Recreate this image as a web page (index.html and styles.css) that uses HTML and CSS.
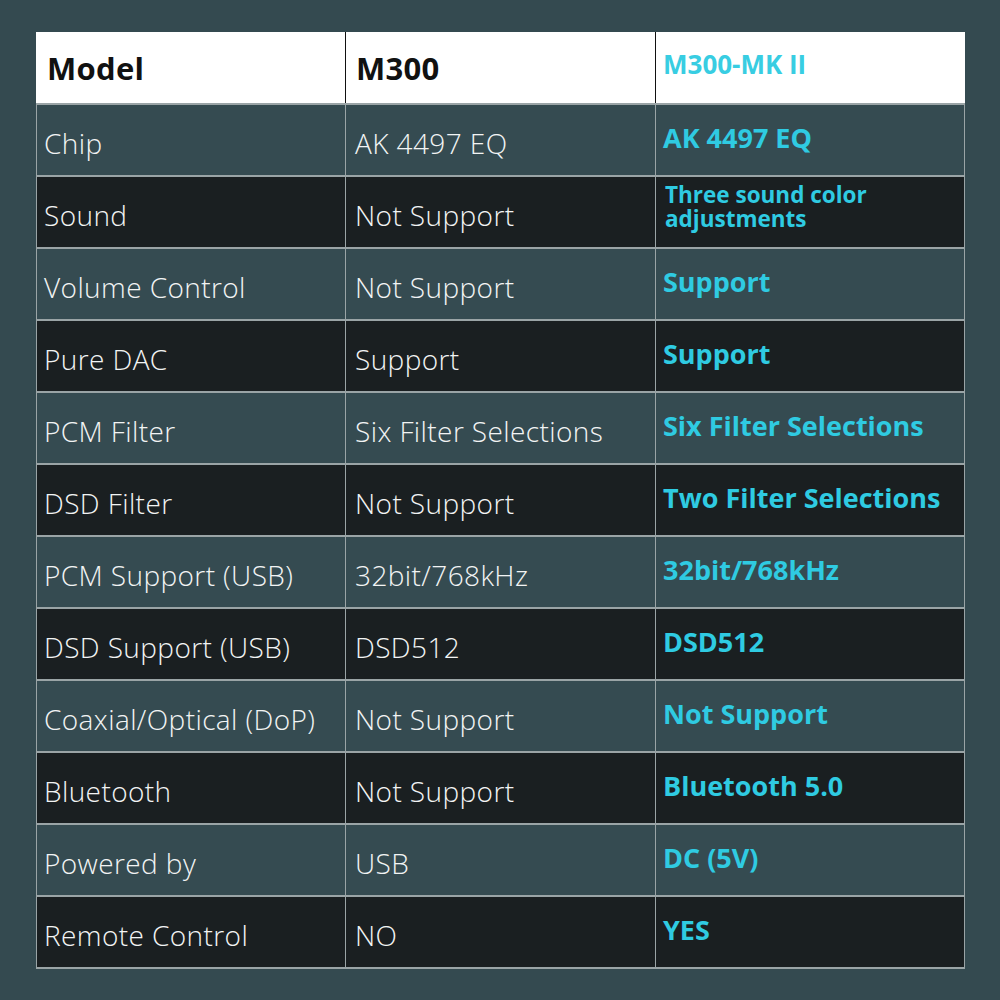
FILE: index.html
```html
<!DOCTYPE html>
<html>
<head>
<meta charset="utf-8">
<link rel="stylesheet" href="styles.css">
</head>
<body>
<div class="page">
  <div class="table">
    <div class="row head">
      <div class="cell c1">Model</div>
      <div class="cell c2">M300</div>
      <div class="cell c3">M300-MK II</div>
    </div>
    <div class="row light"><div class="cell c1">Chip</div><div class="cell c2">AK 4497 EQ</div><div class="cell c3">AK 4497 EQ</div></div>
    <div class="row dark"><div class="cell c1">Sound</div><div class="cell c2">Not Support</div><div class="cell c3 small"><span class="ln">Three sound color</span><span class="ln">adjustments</span></div></div>
    <div class="row light"><div class="cell c1">Volume Control</div><div class="cell c2">Not Support</div><div class="cell c3">Support</div></div>
    <div class="row dark"><div class="cell c1">Pure DAC</div><div class="cell c2">Support</div><div class="cell c3">Support</div></div>
    <div class="row light"><div class="cell c1">PCM Filter</div><div class="cell c2">Six Filter Selections</div><div class="cell c3">Six Filter Selections</div></div>
    <div class="row dark"><div class="cell c1">DSD Filter</div><div class="cell c2">Not Support</div><div class="cell c3">Two Filter Selections</div></div>
    <div class="row light"><div class="cell c1">PCM Support (USB)</div><div class="cell c2">32bit/768kHz</div><div class="cell c3">32bit/768kHz</div></div>
    <div class="row dark"><div class="cell c1">DSD Support (USB)</div><div class="cell c2">DSD512</div><div class="cell c3">DSD512</div></div>
    <div class="row light"><div class="cell c1">Coaxial/Optical (DoP)</div><div class="cell c2">Not Support</div><div class="cell c3">Not Support</div></div>
    <div class="row dark"><div class="cell c1">Bluetooth</div><div class="cell c2">Not Support</div><div class="cell c3">Bluetooth 5.0</div></div>
    <div class="row light"><div class="cell c1">Powered by</div><div class="cell c2">USB</div><div class="cell c3">DC (5V)</div></div>
    <div class="row dark"><div class="cell c1">Remote Control</div><div class="cell c2">NO</div><div class="cell c3">YES</div></div>
  </div>
</div>
</body>
</html>
```
FILE: styles.css
```css
html, body {
  margin: 0;
  padding: 0;
}
body {
  background: #344a50;
  width: 1000px;
  height: 1000px;
  overflow: hidden;
}
.page {
  padding: 32px 35px 0 36px;
}
.table {
  width: 929px;
  border-bottom: 2px solid #9aa4a6;
}
.row {
  display: grid;
  grid-template-columns: 309px 310px 310px;
  height: 70px;
  border-top: 2px solid #9aa4a6;
}
.row.head {
  height: 71px;
  border-top: none;
  background: #ffffff;
}
.row.light { background: #354b51; }
.row.dark { background: #1a1f21; }
.cell {
  display: flex;
  align-items: center;
  padding: 6px 0 0 9px;
  font-family: "Open Sans", "Noto Sans", sans-serif;
  font-weight: 300;
  font-size: 28px;
  color: #f2f4f4;
  letter-spacing: 0.4px;
  white-space: nowrap;
  border-left: 1px solid #9aa4a6;
}
.cell.c1 { padding-left: 7px; }
.row.head .cell {
  border-left: 1px solid #111;
  color: #111;
  font-weight: 700;
  font-size: 31px;
  letter-spacing: 0.3px;
  padding: 0 0 0 10px;
}
.row.head .cell.c1 { border-left: none; padding-left: 11px; }
.cell.c3 {
  font-weight: 700;
  color: #2fcbe2;
  font-size: 27px;
  letter-spacing: 0;
  padding: 0 0 6px 7px;
  border-right: 1px solid #9aa4a6;
}
.row.head .cell.c3 {
  color: #38cde2;
  font-weight: 700;
  font-size: 26px;
  letter-spacing: 0;
  padding: 0 0 8px 7px;
  border-right: none;
}
.cell.c3.small {
  flex-direction: column;
  align-items: flex-start;
  justify-content: center;
  font-size: 22.5px;
  line-height: 24px;
  padding: 0 0 10px 9px;
}
.ln {
  display: block;
  height: 24px;
}
```
